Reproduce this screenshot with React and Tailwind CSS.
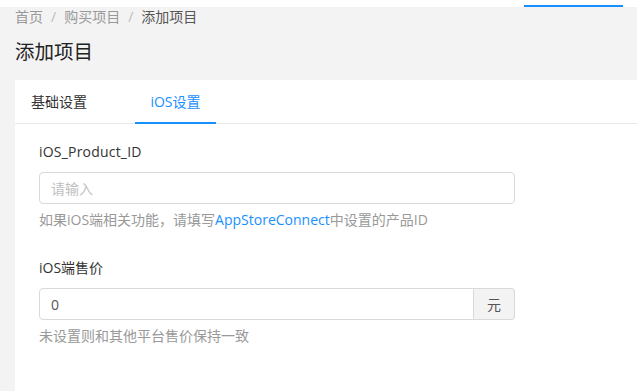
export default function App() {
  return (
    <div
      className="w-[637px] h-[391px] overflow-hidden bg-[#f3f3f3] text-[#333]"
      style={{ fontFamily: '"Open Sans", "Noto Sans CJK SC", sans-serif' }}
    >
      {/* top strip */}
      <div className="h-[7px] bg-white flex items-end">
        <div className="ml-[524px] w-[99px] h-[2px] bg-[#1890ff]" />
      </div>

      {/* breadcrumb */}
      <div className="px-[15px] pt-[1px] text-[14px] leading-[18px] text-[#999] flex gap-[8px]">
        <span>首页</span>
        <span className="text-[#bbb]">/</span>
        <span>购买项目</span>
        <span className="text-[#bbb]">/</span>
        <span className="text-[#555]">添加项目</span>
      </div>

      <h1 className="px-[15px] mt-[13px] text-[19.5px] leading-[26px] text-[#222]">添加项目</h1>

      {/* card */}
      <div className="ml-[15px] mt-[15px] bg-white h-[320px]">
        <div className="flex h-[44px] border-b border-[#e8e8e8] text-[14px]">
          <div className="w-[120px] flex items-center pl-[16px] text-[#333]">基础设置</div>
          <div className="w-[81px] flex items-center justify-center text-[#1890ff] border-b-2 border-[#1890ff] -mb-px">
            iOS设置
          </div>
        </div>

        <div className="pl-[24px] pt-[18px] w-[500px]">
          <label className="block text-[14px] leading-[20px] text-[#333] tracking-[0.2px]">iOS_Product_ID</label>
          <input
            placeholder="请输入"
            className="mt-[10px] block w-[476px] h-[32px] border border-[#d9d9d9] rounded-[4px] px-[11px] text-[14px] placeholder:text-[#bfbfbf] outline-none"
          />
          <p className="mt-[6px] text-[14px] leading-[20px] text-[#999]">
            如果iOS端相关功能，请填写<span className="text-[#1890ff]">AppStoreConnect</span>中设置的产品ID
          </p>

          <label className="block mt-[28px] text-[14px] leading-[20px] text-[#333]">iOS端售价</label>
          <div className="mt-[10px] flex w-[476px] h-[32px]">
            <input
              defaultValue="0"
              className="flex-1 min-w-0 h-full border border-[#d9d9d9] rounded-l-[4px] px-[11px] text-[14px] text-[#555] outline-none"
            />
            <div className="w-[41px] h-full flex items-center justify-center bg-[#f3f3f3] border border-l-0 border-[#d9d9d9] rounded-r-[4px] text-[14px] text-[#555]">
              元
            </div>
          </div>
          <p className="mt-[6px] text-[14px] leading-[20px] text-[#999]">未设置则和其他平台售价保持一致</p>
        </div>
      </div>
    </div>
  );
}
